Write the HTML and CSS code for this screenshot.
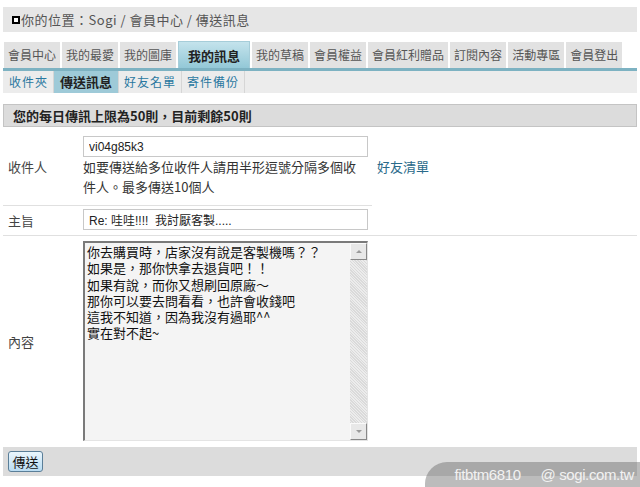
FILE: index.html
```html
<!DOCTYPE html>
<html lang="zh-Hant">
<head>
<meta charset="utf-8">
<title>傳送訊息</title>
<link rel="stylesheet" href="styles.css">
</head>
<body>
<div class="page">
  <div class="crumb"><span class="crumb-icon"></span>你的位置：Sogi / 會員中心 / 傳送訊息</div>

  <nav class="tabs">
    <a class="tab">會員中心</a>
    <a class="tab">我的最愛</a>
    <a class="tab">我的圖庫</a>
    <a class="tab active">我的訊息</a>
    <a class="tab">我的草稿</a>
    <a class="tab">會員權益</a>
    <a class="tab">會員紅利贈品</a>
    <a class="tab">訂閱內容</a>
    <a class="tab">活動專區</a>
    <a class="tab">會員登出</a>
  </nav>
  <nav class="subtabs">
    <a class="subtab">收件夾</a>
    <a class="subtab active">傳送訊息</a>
    <a class="subtab">好友名單</a>
    <a class="subtab">寄件備份</a>
  </nav>

  <div class="quota">您的每日傳訊上限為50則，目前剩餘50則</div>

  <form class="form">
    <div class="label row1">收件人</div>
    <div class="field row1">
      <input class="text-input" type="text" value="vi04g85k3">
      <p class="hint">如要傳送給多位收件人請用半形逗號分隔多個收件人。最多傳送10個人</p>
    </div>
    <div class="extra"><a class="friends">好友清單</a></div>

    <div class="label row2 line">主旨</div>
    <div class="field row2 line"><input class="text-input" type="text" value="Re: 哇哇!!!!  我討厭客製....."></div>
    <div class="extra line"></div>

    <div class="label row3">內容</div>
    <div class="field row3">
      <div class="textbox">
        <textarea class="content">你去購買時，店家沒有說是客製機嗎？？
如果是，那你快拿去退貨吧！！
如果有說，而你又想刷回原廠～
那你可以要去問看看，也許會收錢吧
這我不知道，因為我沒有過耶^^
實在對不起~</textarea>
        <div class="scrollbar">
          <div class="sb-btn"><span class="arrow up"></span></div>
          <div class="sb-track"></div>
          <div class="sb-btn"><span class="arrow down"></span></div>
        </div>
      </div>
    </div>
    <div class="extra"></div>
  </form>

  <div class="actions"><button class="send" type="button">傳送</button></div>
</div>
<div class="watermark"><span>fitbtm6810</span><span>@ sogi.com.tw</span></div>
</body>
</html>
```

FILE: styles.css
```css
* { box-sizing: border-box; }
html, body { margin: 0; padding: 0; background: #fff; }
body {
  font-family: "Noto Sans CJK TC", "Liberation Sans", sans-serif;
  font-size: 12px;
  color: #333;
  width: 640px;
  height: 487px;
  overflow: hidden;
  position: relative;
}
.page { padding: 7px 3px 0 3px; }

.crumb {
  height: 25px;
  line-height: 25px;
  background: #e6e6e6;
  padding-left: 9px;
  font-size: 13px;
  color: #555;
  letter-spacing: 0.5px;
  display: flex;
  align-items: center;
}
.crumb-icon {
  width: 8px; height: 8px;
  border: 2px solid #000;
  background: #fff;
  margin-right: 1px;
}

.tabs {
  display: flex;
  gap: 2px;
  margin-top: 9px;
  padding-left: 1px;
  align-items: flex-end;
  border-bottom: 3px solid #7db2c2;
}
.tab {
  height: 26px;
  line-height: 26px;
  padding: 0 4px;
  background: #e2e2e2;
  color: #555;
  font-size: 12px;
  white-space: nowrap;
}
.tab.active {
  height: 27px;
  padding: 0 9px;
  font-size: 13px;
  font-weight: bold;
  color: #222;
  background: linear-gradient(#c4e3ec, #93c8d7);
  border: 1px solid #a6cdd9;
  border-bottom: none;
  line-height: 27px;
}

.subtabs {
  display: flex;
  height: 22px;
  background: #ececec;
  padding-left: 1px;
}
.subtab {
  line-height: 22px;
  padding: 0 5px;
  color: #2a78a0;
  font-size: 12px;
  letter-spacing: 1px;
  border-right: 1px solid #d6d6d6;
}
.subtab.active {
  background: #9ecad8;
  color: #222;
  font-weight: bold;
  font-size: 13px;
  letter-spacing: 0;
  padding: 0 6px;
}

.quota {
  margin-top: 11px;
  height: 23px;
  line-height: 21px;
  background: #dcdcdc;
  border: 1px solid #c4c4c4;
  padding-left: 9px;
  font-size: 13px;
  font-weight: bold;
  color: #222;
}

.form {
  display: grid;
  grid-template-columns: 80px 289px 1fr;
}
.label {
  padding-left: 5px;
  font-size: 13px;
  color: #444;
  display: flex;
  align-items: center;
}
.row1 { border-bottom: 1px solid #e0e0e0; }
.line { border-bottom: 1px solid #e0e0e0; }
.field.row1 { padding: 9px 0 8px 0; }
.field.row2 { padding: 3px 0 5px 0; }
.field.row3 { padding: 5px 0 5px 0; }

.text-input {
  display: block;
  width: 285px;
  height: 21px;
  border: 1px solid #c8c8c8;
  padding: 0 5px;
  font-family: "Liberation Sans", "Noto Sans CJK TC", sans-serif;
  font-size: 12px;
  color: #222;
  background: #fff;
  outline: none;
}
.hint {
  margin: 0;
  width: 280px;
  font-size: 13px;
  line-height: 20px;
  color: #333;
}
.extra { display: flex; align-items: center; padding-left: 5px; }
.friends { color: #2a6a8a; font-size: 13px; }

.textbox {
  width: 285px;
  height: 200px;
  display: flex;
  border-top: 2px solid #7a7a7a;
  border-left: 2px solid #7a7a7a;
  border-right: 1px solid #e4e4e4;
  border-bottom: 1px solid #e4e4e4;
  background: #f4f4f4;
}
.content {
  flex: 1;
  border: none;
  resize: none;
  background: transparent;
  padding: 1px 2px;
  font-family: "Noto Sans CJK TC", sans-serif;
  font-size: 13px;
  line-height: 16.3px;
  color: #111;
  outline: none;
  overflow: hidden;
}
.scrollbar {
  width: 17px;
  display: flex;
  flex-direction: column;
}
.sb-btn {
  height: 17px;
  background: #e8e8e8;
  border-top: 1px solid #fafafa;
  border-left: 1px solid #fafafa;
  border-right: 1px solid #888;
  border-bottom: 1px solid #888;
  display: flex;
  align-items: center;
  justify-content: center;
}
.sb-track {
  flex: 1;
  background-color: #ececec;
  background-image: repeating-linear-gradient(45deg, #dadada 0 1px, transparent 1px 2px);
}
.arrow { width: 0; height: 0; border-left: 3px solid transparent; border-right: 3px solid transparent; }
.arrow.up { border-bottom: 3px solid #9a9a9a; }
.arrow.down { border-top: 3px solid #9a9a9a; }

.actions {
  margin-top: 1px;
  height: 29px;
  background: #dcdcdc;
  padding: 4px 5px;
}
.send {
  width: 35px;
  height: 21px;
  padding: 0;
  border: 1px solid #5a7e98;
  border-radius: 3px;
  background: linear-gradient(#eaf6fd, #b9dcf2);
  font-family: "Noto Sans CJK TC", sans-serif;
  font-size: 13px;
  line-height: 19px;
  color: #111;
}

.watermark {
  position: absolute;
  left: 425px;
  top: 462px;
  width: 215px;
  height: 25px;
  background: rgba(95, 95, 95, 0.42);
  border-top-left-radius: 22px;
  display: flex;
  justify-content: flex-end;
  align-items: center;
  gap: 20px;
  padding: 0 6px 0 0;
  font-family: "Liberation Sans", sans-serif;
  font-size: 15px;
  color: #f2f2f2;
  letter-spacing: -0.4px;
}
```
